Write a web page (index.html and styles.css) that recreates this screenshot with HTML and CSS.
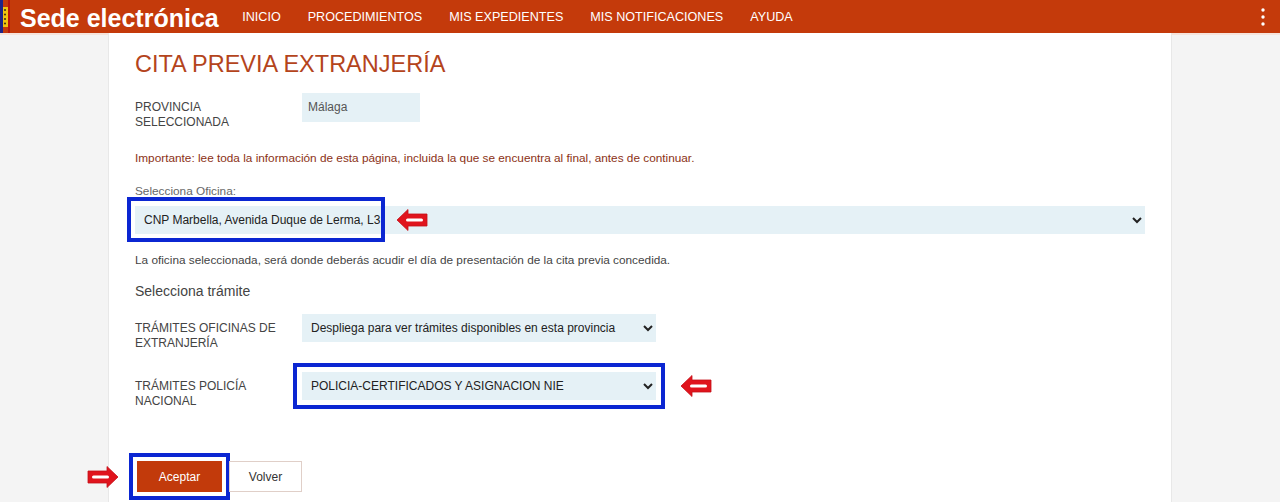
FILE: index.html
```html
<!DOCTYPE html>
<html lang="es">
  <head>
    <meta charset="UTF-8" />
    <meta name="viewport" content="width=device-width, initial-scale=1.0" />
    <title>Cita previa extranjería</title>

    <link rel="stylesheet" href="styles.css">
  </head>
  <body>
    <!-- Barra superior con marca y menú -->
    <header class="topbar">
      <svg class="flag" viewBox="0 0 10 33" aria-hidden="true">
        <rect x="0" y="0" width="3" height="33" fill="#1d2488" />
        <rect x="3" y="7" width="5" height="20" fill="#f1c40f" />
        <circle cx="5" cy="10" r="1" fill="#3a2a10" />
        <circle cx="5" cy="14.5" r="1" fill="#3a2a10" />
        <circle cx="5" cy="19" r="1" fill="#3a2a10" />
        <circle cx="5" cy="23.5" r="1" fill="#3a2a10" />
        <rect x="8" y="0" width="2" height="33" fill="#b8160c" />
      </svg>
      <a class="brand" href="#">Sede electrónica</a>
      <nav aria-label="Menú principal">
        <ul class="menu">
          <li><a href="#">INICIO</a></li>
          <li><a href="#">PROCEDIMIENTOS</a></li>
          <li><a href="#">MIS EXPEDIENTES</a></li>
          <li><a href="#">MIS NOTIFICACIONES</a></li>
          <li><a href="#">AYUDA</a></li>
        </ul>
      </nav>
      <button class="kebab" aria-label="Más opciones">
        <svg viewBox="0 0 4 18" aria-hidden="true">
          <circle cx="2" cy="2" r="1.7" fill="#fff" />
          <circle cx="2" cy="9" r="1.7" fill="#fff" />
          <circle cx="2" cy="16" r="1.7" fill="#fff" />
        </svg>
      </button>
    </header>

    <!-- Contenido central -->
    <main class="page">
      <h1 class="title">CITA PREVIA EXTRANJERÍA</h1>

      <div class="field-row">
        <span class="field-label">PROVINCIA SELECCIONADA</span>
        <div class="value">Málaga</div>
      </div>

      <p class="notice">Importante: lee toda la información de esta página, incluida la que se encuentra al final, antes de continuar.</p>

      <label class="small-label" for="oficina">Selecciona Oficina:</label>
      <div class="select-wrap">
        <select id="oficina" class="select select-wide">
          <option>CNP Marbella, Avenida Duque de Lerma, L3</option>
        </select>
        <!-- Marcas de ayuda sobre el formulario -->
        <span class="mark-box"></span>
        <svg class="arrow arrow-oficina" viewBox="0 0 32 22" aria-hidden="true">
          <path d="M1 11 L12 0.5 L12 5 L31 5 L31 17 L12 17 L12 21.5 Z" fill="#e0141d" stroke="#c40f18" stroke-width="0.8" stroke-linejoin="round" />
          <rect x="10" y="9.5" width="17" height="3" rx="1.5" fill="#fff" />
        </svg>
      </div>

      <p class="help">La oficina seleccionada, será donde deberás acudir el día de presentación de la cita previa concedida.</p>

      <h2 class="subtitle">Selecciona trámite</h2>

      <div class="field-row row-tramite">
        <label class="field-label" for="extranjeria">TRÁMITES OFICINAS DE EXTRANJERÍA</label>
        <select id="extranjeria" class="select">
          <option>Despliega para ver trámites disponibles en esta provincia</option>
        </select>
      </div>

      <div class="field-row row-policia">
        <label class="field-label" for="policia">TRÁMITES POLICÍA NACIONAL</label>
        <div class="with-arrow">
          <select id="policia" class="select marked">
            <option>POLICIA-CERTIFICADOS Y ASIGNACION NIE</option>
          </select>
          <svg class="arrow" viewBox="0 0 32 22" aria-hidden="true">
            <path d="M1 11 L12 0.5 L12 5 L31 5 L31 17 L12 17 L12 21.5 Z" fill="#e0141d" stroke="#c40f18" stroke-width="0.8" stroke-linejoin="round" />
            <rect x="10" y="9.5" width="17" height="3" rx="1.5" fill="#fff" />
          </svg>
        </div>
      </div>

      <div class="actions">
        <svg class="arrow arrow-right" viewBox="0 0 32 22" aria-hidden="true">
          <path d="M1 11 L12 0.5 L12 5 L31 5 L31 17 L12 17 L12 21.5 Z" fill="#e0141d" stroke="#c40f18" stroke-width="0.8" stroke-linejoin="round" />
          <rect x="10" y="9.5" width="17" height="3" rx="1.5" fill="#fff" />
        </svg>
        <button class="btn btn-primary marked">Aceptar</button>
        <button class="btn">Volver</button>
      </div>
    </main>
  </body>
</html>
```

FILE: styles.css
```css
* {
  box-sizing: border-box;
}

body {
  margin: 0;
  background: #f4f4f4; /* laterales grises */
  font-family: "Liberation Sans", Arial, sans-serif;
  color: #333;
}

/* Barra superior */
.topbar {
  display: flex;
  align-items: center;
  height: 33px;
  background: #c43a0b;
  box-shadow: 0 2px 0 #f6e4dc;
}

.flag {
  width: 10px;
  height: 33px;
  flex-shrink: 0;
}

.brand {
  margin-left: 10px;
  padding-top: 3px;
  color: #fff;
  font-size: 25px;
  font-weight: bold;
  text-decoration: none;
}

.menu {
  list-style: none;
  display: flex;
  margin: 0 0 0 10px;
  padding: 0;
}

.menu a {
  display: block;
  padding: 0 13.5px;
  color: #fff;
  font-size: 12.6px;
  text-decoration: none;
}

.kebab {
  margin-left: auto;
  margin-right: 15px;
  padding: 0;
  border: 0;
  background: none;
  width: 4px;
  height: 18px;
  cursor: pointer;
}

.kebab svg {
  display: block;
  width: 4px;
  height: 18px;
}

/* Columna central blanca */
.page {
  width: 1064px;
  min-height: calc(100vh - 33px);
  margin: 0 auto;
  padding: 17px 26px 0;
  background: #fff;
  border-left: 1px solid #e8e8e8;
  border-right: 1px solid #e8e8e8;
}

.title {
  margin: 0 0 15px;
  font-size: 23.5px;
  line-height: 28px;
  font-weight: normal;
  color: #b4441c;
}

/* Fila etiqueta + campo */
.field-row {
  display: grid;
  grid-template-columns: 167px 1fr;
  align-items: baseline;
}

.field-label {
  padding-right: 20px;
  font-size: 12px;
  line-height: 14.5px;
  color: #444;
}

.value {
  width: 118px;
  height: 29px;
  padding: 0 6px;
  line-height: 29px;
  font-size: 12px;
  color: #555;
  background: #e5f1f6;
}

.notice {
  margin: 22px 0 0;
  font-size: 11.8px;
  line-height: 15px;
  color: #8b3115;
}

.small-label {
  display: block;
  margin-top: 18px;
  font-size: 11.8px;
  line-height: 15px;
  color: #666;
}

/* Desplegables */
.select {
  width: 354px;
  height: 28px;
  padding: 0 5px;
  border: none;
  border-radius: 0;
  background-color: #e5f1f6;
  font-family: inherit;
  font-size: 12px;
  color: #222;
}

.select-wide {
  width: 100%;
}

.select-wrap {
  position: relative;
  margin-top: 7px;
}

.help {
  margin: 19px 0 0;
  font-size: 11.8px;
  line-height: 15px;
  color: #444;
}

.subtitle {
  margin: 15px 0 0;
  font-size: 14px;
  line-height: 17px;
  font-weight: normal;
  color: #444;
}

.row-tramite {
  margin-top: 14px;
}

.row-policia {
  margin-top: 22px;
}

.with-arrow {
  display: flex;
  align-items: center;
}

/* Recuadros azules y flechas rojas de la captura */
.marked {
  outline: 4px solid #0b26d2;
  outline-offset: 5px;
}

.mark-box {
  position: absolute;
  left: -8px;
  top: -9px;
  width: 258px;
  height: 45px;
  border: 4px solid #0b26d2;
}

.arrow {
  width: 32px;
  height: 24px;
  flex-shrink: 0;
}

.with-arrow .arrow {
  margin-left: 24px;
}

.arrow-oficina {
  position: absolute;
  left: 261px;
  top: 2px;
}

.arrow-right {
  position: absolute;
  left: -48px;
  top: 4px;
  transform: scaleX(-1);
}

/* Botones */
.actions {
  position: relative;
  display: flex;
  gap: 7px;
  margin-top: 53px;
  padding-left: 2px;
}

.btn {
  height: 31px;
  width: 73px;
  border: 1px solid #e0cfc8;
  background: #fff;
  font-family: inherit;
  font-size: 12px;
  color: #333;
  cursor: pointer;
}

.btn-primary {
  width: 85px;
  background: #c23a0b;
  border-color: #c23a0b;
  color: #fff;
  outline-offset: 4px;
}
```
